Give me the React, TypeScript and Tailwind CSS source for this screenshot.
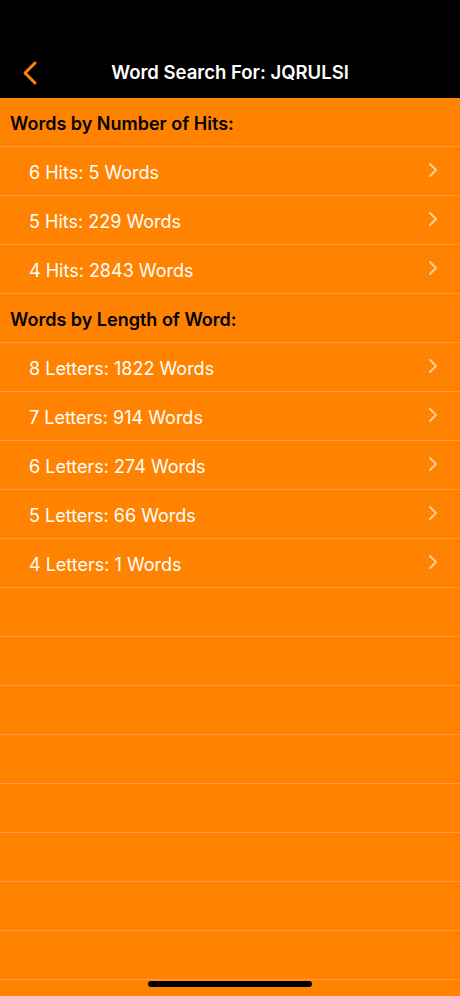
import React from "react";

const hits = ["6 Hits: 5 Words", "5 Hits: 229 Words", "4 Hits: 2843 Words"];
const lengths = [
  "8 Letters: 1822 Words",
  "7 Letters: 914 Words",
  "6 Letters: 274 Words",
  "5 Letters: 66 Words",
  "4 Letters: 1 Words",
];

function Chevron() {
  return (
    <svg width="10" height="16" viewBox="0 0 10 16" fill="none">
      <path d="M2 2l6 6-6 6" stroke="rgba(255,255,255,0.6)" strokeWidth="2" strokeLinecap="round" strokeLinejoin="round" />
    </svg>
  );
}

function Row({ label }: { label: string }) {
  return (
    <div className="h-[49px] flex items-center justify-between pl-[29px] pr-[22px] pt-[2px] border-b border-[#ff9c3f] shrink-0">
      <span className="text-[18px] text-white">{label}</span>
      <div className="-mt-[4px]">
        <Chevron />
      </div>
    </div>
  );
}

function Header({ label }: { label: string }) {
  return (
    <div className="h-[49px] flex items-center pl-[10px] pt-[2px] border-b border-[#ff9c3f] shrink-0">
      <span className="text-[18px] font-semibold text-black">{label}</span>
    </div>
  );
}

export default function App() {
  return (
    <div
      className="w-[460px] h-[996px] bg-[#ff8300] relative overflow-hidden flex flex-col"
      style={{ fontFamily: "Inter, 'Noto Sans', sans-serif" }}
    >
      <div className="h-[98px] bg-black flex items-end pb-[10px] relative shrink-0">
        <div className="w-full flex items-center justify-center h-[30px] relative">
          <svg className="absolute left-[21px]" width="18" height="26" viewBox="0 0 18 26" fill="none">
            <path d="M14 3L4 13l10 10" stroke="#ff8300" strokeWidth="3" strokeLinecap="round" strokeLinejoin="round" />
          </svg>
          <span className="text-white text-[18.5px] font-semibold">Word Search For: JQRULSI</span>
        </div>
      </div>
      <div className="flex flex-col">
        <Header label="Words by Number of Hits:" />
        {hits.map((h) => (
          <Row key={h} label={h} />
        ))}
        <Header label="Words by Length of Word:" />
        {lengths.map((h) => (
          <Row key={h} label={h} />
        ))}
        {Array.from({ length: 8 }).map((_, i) => (
          <div key={i} className="h-[49px] border-b border-[#ff9c3f] shrink-0" />
        ))}
      </div>
      <div className="absolute bottom-[9px] left-[148px] w-[164px] h-[6px] rounded-full bg-black" />
    </div>
  );
}
